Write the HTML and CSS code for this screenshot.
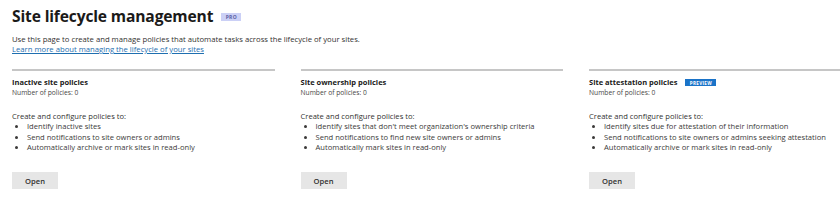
FILE: index.html
```html
<!DOCTYPE html>
<html lang="en">
<head>
<meta charset="utf-8">
<title>Site lifecycle management</title>
<link rel="stylesheet" href="styles.css">
</head>
<body>
<main class="page">
  <header class="header">
    <div class="title-row">
      <h1 class="title">Site lifecycle management</h1>
      <span class="badge badge-pro">PRO</span>
    </div>
    <p class="desc">Use this page to create and manage policies that automate tasks across the lifecycle of your sites.</p>
    <a class="link" href="#">Learn more about managing the lifecycle of your sites</a>
  </header>

  <section class="cards">
    <article class="card">
      <div class="card-head"><h2 class="card-title">Inactive site policies</h2></div>
      <div class="count">Number of policies: 0</div>
      <p class="intro">Create and configure policies to:</p>
      <ul class="list">
        <li>Identify inactive sites</li>
        <li>Send notifications to site owners or admins</li>
        <li>Automatically archive or mark sites in read-only</li>
      </ul>
      <button class="btn" type="button">Open</button>
    </article>

    <article class="card">
      <div class="card-head"><h2 class="card-title">Site ownership policies</h2></div>
      <div class="count">Number of policies: 0</div>
      <p class="intro">Create and configure policies to:</p>
      <ul class="list">
        <li>Identify sites that don't meet organization's ownership criteria</li>
        <li>Send notifications to find new site owners or admins</li>
        <li>Automatically mark sites in read-only</li>
      </ul>
      <button class="btn" type="button">Open</button>
    </article>

    <article class="card">
      <div class="card-head"><h2 class="card-title">Site attestation policies</h2><span class="badge badge-preview">PREVIEW</span></div>
      <div class="count">Number of policies: 0</div>
      <p class="intro">Create and configure policies to:</p>
      <ul class="list">
        <li>Identify sites due for attestation of their information</li>
        <li>Send notifications to site owners or admins seeking attestation</li>
        <li>Automatically archive or mark sites in read-only</li>
      </ul>
      <button class="btn" type="button">Open</button>
    </article>
  </section>
</main>
</body>
</html>
```

FILE: styles.css
```css
html, body {
  margin: 0;
  padding: 0;
  background: #ffffff;
}

body {
  width: 840px;
  height: 218px;
  overflow: hidden;
  font-family: "Open Sans", "Noto Sans", "Liberation Sans", sans-serif;
  color: #323130;
}

.page {
  padding: 0 12px;
}

.title-row {
  display: flex;
  align-items: center;
  gap: 8px;
  padding-top: 6px;
}

.title {
  margin: 0;
  font-size: 15.6px;
  line-height: 20px;
  font-weight: 700;
  color: #1b1a19;
  letter-spacing: -0.15px;
}

.badge {
  display: inline-flex;
  align-items: center;
  justify-content: center;
  font-weight: 700;
  letter-spacing: 0.3px;
}

.badge-pro {
  width: 20px;
  height: 8px;
  font-size: 5px;
  background: #cbd0f6;
  color: #5b5fa3;
  margin-top: 1px;
}

.badge-preview {
  width: 31px;
  height: 7px;
  font-size: 4.6px;
  background: #1a73c8;
  color: #ffffff;
  margin-left: 8px;
}

.desc {
  margin: 8px 0 0;
  font-size: 7.7px;
  line-height: 10px;
  color: #323130;
}

.link {
  display: block;
  font-size: 7.7px;
  line-height: 10px;
  color: #1f6fb0;
  text-decoration: underline;
}

.cards {
  display: grid;
  grid-template-columns: repeat(3, 262.5px);
  column-gap: 26px;
  margin-top: 15px;
}

.card {
  border-top: 2px solid #c6c6c6;
  padding-top: 6px;
}

.card-head {
  display: flex;
  align-items: center;
  height: 11px;
}

.card-title {
  margin: 0;
  font-size: 7.5px;
  line-height: 11px;
  font-weight: 700;
  color: #1b1a19;
}

.count {
  font-size: 6.7px;
  line-height: 10px;
  color: #484644;
}

.intro {
  margin: 13px 0 0;
  font-size: 7.6px;
  line-height: 10px;
  color: #323130;
}

.list {
  margin: 0;
  padding-left: 15px;
  font-size: 7.6px;
  line-height: 10.5px;
  color: #3b3a39;
}

.btn {
  display: block;
  margin-top: 19.5px;
  width: 46px;
  height: 17px;
  padding: 0;
  border: none;
  background: #e6e6e6;
  font-family: inherit;
  font-size: 7.6px;
  font-weight: 600;
  color: #323130;
}
```
